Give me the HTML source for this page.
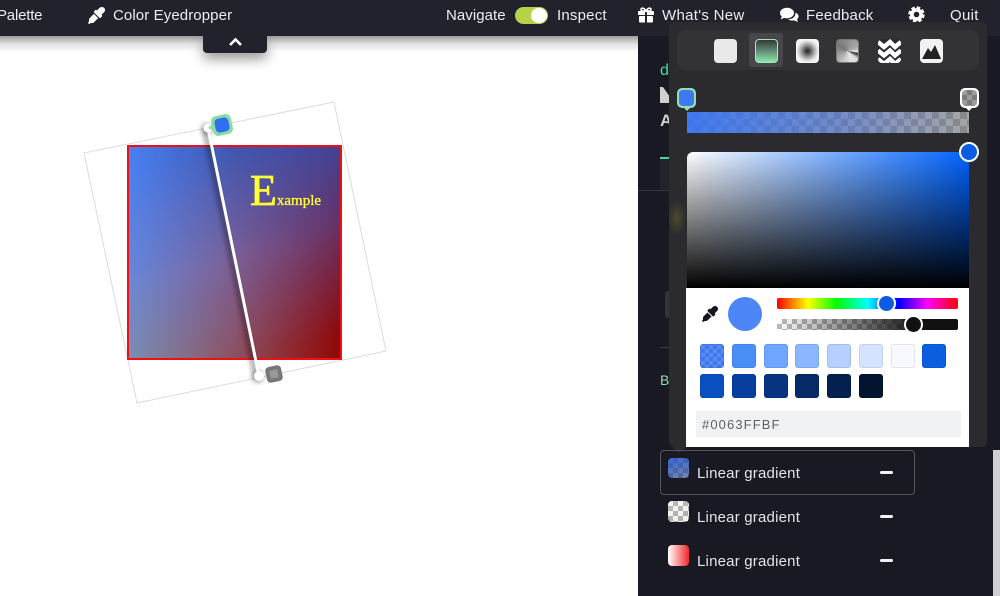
<!DOCTYPE html>
<html>
<head>
<meta charset="utf-8">
<style>
html,body{margin:0;padding:0;width:1000px;height:596px;overflow:hidden;background:#fff;font-family:"Liberation Sans",sans-serif}
.a{position:absolute}
.t{position:absolute;color:#ececee;font-size:15px;line-height:18px;white-space:nowrap}
.sw{position:absolute;width:24px;height:24px;border-radius:3px;box-sizing:border-box;border:1px solid rgba(0,0,0,.08)}
.ti{position:absolute;top:39px;width:23px;height:24px;border-radius:4px;box-sizing:border-box;overflow:hidden}
.minus{position:absolute;left:880px;width:13px;height:3.5px;background:#f2f2f2;border-radius:1.5px}
.li{position:absolute;left:697px;color:#e4e4e6;font-size:15px;line-height:18px;letter-spacing:.2px;white-space:nowrap}
.g{position:absolute;left:0;top:0;width:100%;height:100%}
</style>
</head>
<body>
<div class="a" style="left:0;top:0;width:1000px;height:596px;background:#fff;overflow:hidden">

<!-- canvas -->
<svg class="a" style="left:0;top:0" width="640" height="596">
<polygon points="84,153 334,102 386,351 137,403" fill="none" stroke="#dcdcdc" stroke-width="1"/>
</svg>
<div class="a" style="left:127px;top:145px;width:215px;height:215px;box-sizing:border-box;border:2px solid #ee1111;overflow:hidden">
<div class="g" style="background:linear-gradient(to right,#808fa8,#8e5060 50%,#8f0808)"></div>
<div class="g" style="background:linear-gradient(to right,#6a86d8,#7a6098 50%,#6a2f60);-webkit-mask-image:linear-gradient(168deg,#000 50%,transparent 92%);mask-image:linear-gradient(168deg,#000 50%,transparent 92%)"></div>
<div class="g" style="background:linear-gradient(to right,#4a80f0,#3f55b0 50%,#3a45a0);-webkit-mask-image:linear-gradient(168deg,#000 8%,transparent 52%);mask-image:linear-gradient(168deg,#000 8%,transparent 52%)"></div>
</div>
<div class="a" style="left:250px;top:166px;color:#ffff33;font-family:'Liberation Serif',serif;line-height:50px;white-space:nowrap;font-size:15px;-webkit-text-stroke:.3px #ffff33"><span style="font-size:44px;-webkit-text-stroke:.7px #ffff33">E</span>xample</div>

<svg class="a" style="left:0;top:0" width="640" height="596">
<defs><filter id="s" x="-100%" y="-20%" width="300%" height="140%"><feGaussianBlur stdDeviation="2.5"/></filter></defs>
<line x1="205" y1="130" x2="256" y2="378" stroke="#000" stroke-opacity=".35" stroke-width="5" filter="url(#s)"/>
<circle cx="258" cy="377" r="6" fill="#000" fill-opacity=".3" filter="url(#s)"/>
<circle cx="207" cy="129" r="6" fill="#000" fill-opacity=".3" filter="url(#s)"/>
<line x1="208" y1="128" x2="259" y2="376" stroke="#fff" stroke-width="3"/>
<circle cx="208" cy="128" r="4.500" fill="#fff"/>
<circle cx="259" cy="376" r="5" fill="#fff"/>
<polygon points="214,122 208,128 215,132" fill="#8fe0b0"/>
<rect x="212" y="115" width="20" height="20" rx="5" fill="#86dca6" transform="rotate(-12 222 125)"/>
<rect x="215" y="118" width="14" height="14" rx="4" fill="#2f6ff0" transform="rotate(-12 222 125)"/>
<rect x="266" y="366" width="16" height="16" rx="4" fill="#777" transform="rotate(-12 274 374)"/>
<rect x="270" y="370" width="8" height="8" fill="#999" transform="rotate(-12 274 374)"/>
</svg>

<!-- right panel -->
<div class="a" style="left:638px;top:36px;width:362px;height:560px;background:#191924"></div>
<div class="a" style="left:638px;top:190px;width:40px;height:1px;background:#34343c"></div>
<div class="a" style="left:660px;top:62px;color:#3be09a;font-size:16px;line-height:18px">d</div>
<svg class="a" style="left:660px;top:87px" width="10" height="17"><path d="M0 0H3L10 10V16H0Z" fill="#cfcfcf"/></svg>
<div class="a" style="left:660px;top:112px;color:#d0d0d0;font-size:17px;line-height:18px;font-weight:bold">A</div>
<div class="a" style="left:660px;top:157px;width:10px;height:2px;background:#4ad6a0"></div>
<div class="a" style="left:660px;top:159px;width:10px;height:31px;background:#23232b"></div>
<div class="a" style="left:665px;top:291px;width:5px;height:27px;background:#33333a;border-radius:3px 0 0 3px"></div>
<div class="a" style="left:660px;top:347px;width:10px;height:1px;background:#3a3a42"></div>
<div class="a" style="left:660px;top:371px;color:#8fdcae;font-size:14px;line-height:18px">B</div>
<div class="a" style="left:993px;top:450px;width:7px;height:146px;background:#cfcfcf"></div>

<!-- top bar -->
<div class="a" style="left:0;top:36px;width:638px;height:16px;background:linear-gradient(#9c9c9e,#e2e2e2 50%,#fff)"></div>
<div class="a" style="left:203px;top:36px;width:64px;height:17px;background:#22222c;border-radius:0 0 4px 4px;box-shadow:0 6px 12px rgba(0,0,0,.4)"></div>
<svg class="a" style="left:227px;top:36px" width="18" height="12"><path d="M3 9 L8.500 3.500 L14 9" fill="none" stroke="#fff" stroke-width="2.600"/></svg>
<div class="a" style="left:0;top:0;width:1000px;height:36px;background:#22222c"></div>

<div class="t" style="left:-3px;top:7px;letter-spacing:-.2px">Palette</div>
<svg class="a" style="left:88px;top:7px" width="17" height="17" viewBox="0 0 512 512"><path fill="#fff" d="M50.750 333.250c-12 12-18.750 28.280-18.750 45.260V424L0 480l32 32 56-32h45.490c16.970 0 33.250-6.740 45.250-18.740l126.640-126.620-128-128L50.750 333.250zM483.880 28.120c-37.470-37.500-98.270-37.500-135.750 0l-77.090 77.090-13.100-13.100c-9.440-9.440-24.650-9.310-33.940 0l-40.970 40.970c-9.370 9.370-9.370 24.570 0 33.940l161.940 161.940c9.440 9.440 24.650 9.310 33.940 0L419.880 282.060c9.370-9.370 9.370-24.570 0-33.940l-13.100-13.100 77.090-77.090c37.500-37.480 37.500-98.290.01-135.810z"/></svg>
<div class="t" style="left:113px;top:7px;letter-spacing:.1px">Color Eyedropper</div>
<div class="t" style="left:446px;top:7px;letter-spacing:.05px">Navigate</div>
<div class="a" style="left:515px;top:7px;width:33px;height:17px;border-radius:9px;background:#b4d348"></div>
<div class="a" style="left:531px;top:8px;width:16px;height:15px;border-radius:8px;background:#fff"></div>
<div class="t" style="left:557px;top:7px;letter-spacing:.2px">Inspect</div>
<svg class="a" style="left:638px;top:7px" width="16" height="16" viewBox="0 0 16 16"><rect x="0" y="4" width="16" height="4" rx=".8" fill="#fff"/><rect x="1" y="9" width="14" height="6.500" rx="1" fill="#fff"/><rect x="7" y="4" width="2" height="12" fill="#22222c"/><path d="M8 4C6 .5 3 .5 3 2.500S6 4 8 4C10 4 13 4.500 13 2.500S10 .5 8 4Z" fill="none" stroke="#fff" stroke-width="1.600"/></svg>
<div class="t" style="left:662px;top:7px;letter-spacing:.3px">What's New</div>
<svg class="a" style="left:780px;top:7px" width="19" height="16" viewBox="0 0 19 16"><ellipse cx="7" cy="6" rx="7" ry="5.300" fill="#fff"/><path d="M2 9 L.5 12.500 L6 10Z" fill="#fff"/><path d="M15.500 5.500C17.500 6.500 18.700 8 18.500 9.700 18.300 11 17.500 12 17 12.400L18 15 14 13.400C12 13.800 9.500 13.500 8 12.300 12 12.300 15.800 10 15.500 5.500Z" fill="#fff"/></svg>
<div class="t" style="left:806px;top:7px;letter-spacing:.2px">Feedback</div>
<svg class="a" style="left:908px;top:6px" width="17" height="17" viewBox="0 0 17 17"><circle cx="8.500" cy="8.500" r="4.600" fill="none" stroke="#fff" stroke-width="3.600"/><circle cx="8.500" cy="8.500" r="7" fill="none" stroke="#fff" stroke-width="2.400" stroke-dasharray="3.500 2"/></svg>
<div class="t" style="left:950px;top:7px;letter-spacing:.3px">Quit</div>

<!-- popover -->
<div class="a" style="left:669px;top:22px;width:318px;height:425px;background:#2b2b2f;border-radius:6px"></div>
<div class="a" style="left:669px;top:200px;width:17px;height:36px;background:radial-gradient(ellipse at 45% 50%,rgba(130,120,40,.4),rgba(130,120,40,0) 70%)"></div>
<div class="a" style="left:672px;top:447px;width:0;height:0;border-left:7px solid transparent;border-right:7px solid transparent;border-top:6px solid #2b2b2f"></div>
<div class="a" style="left:677px;top:30px;width:302px;height:40px;background:#333336;border-radius:8px"></div>
<div class="a" style="left:749px;top:33px;width:34px;height:34px;background:#47474b;border-radius:3px"></div>

<div class="ti" style="left:714px;background:#e9e9ea"></div>
<div class="ti" style="left:755px;background:linear-gradient(#34383a,#8fe3ae);border:1.500px solid #a5e8bd"></div>
<div class="ti" style="left:796px;background:radial-gradient(circle,#222 0%,#555 18%,#aaa 45%,#f2f2f2 72%);border:1px solid #f4f4f4"></div>
<div class="ti" style="left:836px;background:conic-gradient(from 100deg,#111 0deg,#ddd 30deg,#e4e4e4 60deg,#777 200deg,#aaa 330deg,#eee 360deg);border:1px solid #777"></div>
<div class="ti" style="left:878px;background:#2b2b2f">
<svg width="23" height="24" style="display:block"><path d="M0 3 L6 8 L12 3 L17 8 L23 3 M0 11.500 L6 16.500 L12 11.500 L17 16.500 L23 11.500 M0 20 L6 25 L12 20 L17 25 L23 20" fill="none" stroke="#fff" stroke-width="4.500"/></svg></div>
<div class="ti" style="left:920px;background:#f2f2f2">
<svg width="23" height="24" style="display:block"><path d="M2 20 L8 9 L11 13 L15 6 L21 20Z" fill="#222"/></svg></div>

<!-- gradient stops -->
<div class="a" style="left:677px;top:88px;width:19px;height:20px;background:#8fe0b0;border-radius:5px"></div>
<div class="a" style="left:682px;top:106px;width:0;height:0;border-left:5px solid transparent;border-right:5px solid transparent;border-top:5px solid #8fe0b0"></div>
<div class="a" style="left:679px;top:90px;width:15px;height:16px;background:#3f78f2;border-radius:4px"></div>
<div class="a" style="left:960px;top:88px;width:19px;height:20px;background:#fff;border-radius:5px"></div>
<div class="a" style="left:964px;top:106px;width:0;height:0;border-left:5px solid transparent;border-right:5px solid transparent;border-top:5px solid #fff"></div>
<div class="a" style="left:962px;top:90px;width:15px;height:16px;border-radius:4px;background-color:#8a8a8a;background-image:conic-gradient(#7a7a7a 25%,#9c9c9c 0 50%,#7a7a7a 0 75%,#9c9c9c 0);background-size:10px 10px"></div>

<div class="a" style="left:687px;top:112px;width:282px;height:21px;background-image:linear-gradient(to right,rgba(50,115,250,.88),rgba(60,110,235,.42) 60%,rgba(120,120,120,0)),conic-gradient(#8a8a8a 25%,#a6a6a6 0 50%,#8a8a8a 0 75%,#a6a6a6 0);background-size:100% 100%,14px 14px"></div>

<!-- picker -->
<div class="a" style="left:687px;top:152px;width:282px;height:136px;background:linear-gradient(to bottom,rgba(0,0,0,0),#000),linear-gradient(to right,#fff,#0063ff);border-radius:6px 6px 0 0"></div>
<div class="a" style="left:959px;top:142px;width:20px;height:20px;border-radius:50%;background:#0b5ce0;border:2px solid #fff;box-sizing:border-box"></div>
<div class="a" style="left:686px;top:288px;width:283px;height:159px;background:#fff"></div>

<svg class="a" style="left:702px;top:306px" width="16" height="16" viewBox="0 0 512 512"><path fill="#14141c" d="M50.750 333.250c-12 12-18.750 28.280-18.750 45.260V424L0 480l32 32 56-32h45.490c16.970 0 33.250-6.740 45.250-18.740l126.640-126.620-128-128L50.750 333.250zM483.880 28.120c-37.470-37.500-98.270-37.500-135.750 0l-77.090 77.090-13.100-13.100c-9.440-9.440-24.650-9.310-33.940 0l-40.970 40.970c-9.370 9.370-9.370 24.570 0 33.940l161.940 161.940c9.440 9.440 24.650 9.310 33.940 0L419.880 282.060c9.370-9.370 9.370-24.570 0-33.940l-13.100-13.100 77.090-77.090c37.500-37.480 37.500-98.290.01-135.810z"/></svg>
<div class="a" style="left:728px;top:297px;width:34px;height:34px;border-radius:50%;background:#4d87f7"></div>

<div class="a" style="left:777px;top:298px;width:181px;height:11px;border-radius:2px;background:linear-gradient(to right,#f00,#ff0 17%,#0f0 33%,#0ff 50%,#00f 67%,#f0f 83%,#f00)"></div>
<div class="a" style="left:877px;top:294px;width:19px;height:19px;border-radius:50%;background:#0b5ce0;border:2px solid #fff;box-sizing:border-box"></div>
<div class="a" style="left:777px;top:319px;width:181px;height:11px;border-radius:2px;background-image:linear-gradient(to right,rgba(17,17,17,0),#111 80%),conic-gradient(#bbb 25%,#fff 0 50%,#bbb 0 75%,#fff 0);background-size:100% 100%,10px 10px"></div>
<div class="a" style="left:904px;top:315px;width:19px;height:19px;border-radius:50%;background:#111;border:2px solid #fff;box-sizing:border-box"></div>

<div class="sw" style="left:700px;top:344px;background-color:#4a80f0;background-image:conic-gradient(#3f78ee 25%,#5a8cf2 0 50%,#3f78ee 0 75%,#5a8cf2 0);background-size:8px 8px"></div>
<div class="sw" style="left:732px;top:344px;background:#4a8ef8"></div>
<div class="sw" style="left:764px;top:344px;background:#6ea5ff"></div>
<div class="sw" style="left:795px;top:344px;background:#8ab6ff"></div>
<div class="sw" style="left:827px;top:344px;background:#b5cfff"></div>
<div class="sw" style="left:859px;top:344px;background:#d5e3ff"></div>
<div class="sw" style="left:891px;top:344px;background:#f7f9ff"></div>
<div class="sw" style="left:922px;top:344px;background:#0a5fe0"></div>
<div class="sw" style="left:700px;top:374px;background:#0a4fc0"></div>
<div class="sw" style="left:732px;top:374px;background:#083f9e"></div>
<div class="sw" style="left:764px;top:374px;background:#07337f"></div>
<div class="sw" style="left:795px;top:374px;background:#062a66"></div>
<div class="sw" style="left:827px;top:374px;background:#04204f"></div>
<div class="sw" style="left:859px;top:374px;background:#02142f"></div>

<div class="a" style="left:696px;top:411px;width:265px;height:26px;background:#f1f2f4"></div>
<div class="a" style="left:702px;top:416px;font-size:13px;line-height:17px;color:#5d6068;letter-spacing:1.100px">#0063FFBF</div>

<!-- list -->
<div class="a" style="left:660px;top:450px;width:255px;height:45px;box-sizing:border-box;border:1px solid #55555c;border-radius:4px"></div>
<div class="a" style="left:668px;top:458px;width:21px;height:20px;border-radius:4px;background-image:linear-gradient(160deg,rgba(40,90,220,.85),rgba(50,90,180,.45)),conic-gradient(#777 25%,#aaa 0 50%,#777 0 75%,#aaa 0);background-size:100% 100%,10px 10px"></div>
<div class="li" style="top:465px">Linear gradient</div>
<div class="minus" style="top:470.500px"></div>
<div class="a" style="left:668px;top:501px;width:21px;height:21px;border-radius:4px;background-image:linear-gradient(160deg,rgba(255,255,255,.35),rgba(255,255,255,.15)),conic-gradient(#999 25%,#eee 0 50%,#999 0 75%,#eee 0);background-size:100% 100%,10px 10px"></div>
<div class="li" style="top:509px">Linear gradient</div>
<div class="minus" style="top:514.500px"></div>
<div class="a" style="left:668px;top:545px;width:21px;height:21px;border-radius:4px;background:linear-gradient(to right,#fff,#f02828)"></div>
<div class="li" style="top:553px">Linear gradient</div>
<div class="minus" style="top:558.500px"></div>
</div>
</body>
</html>
